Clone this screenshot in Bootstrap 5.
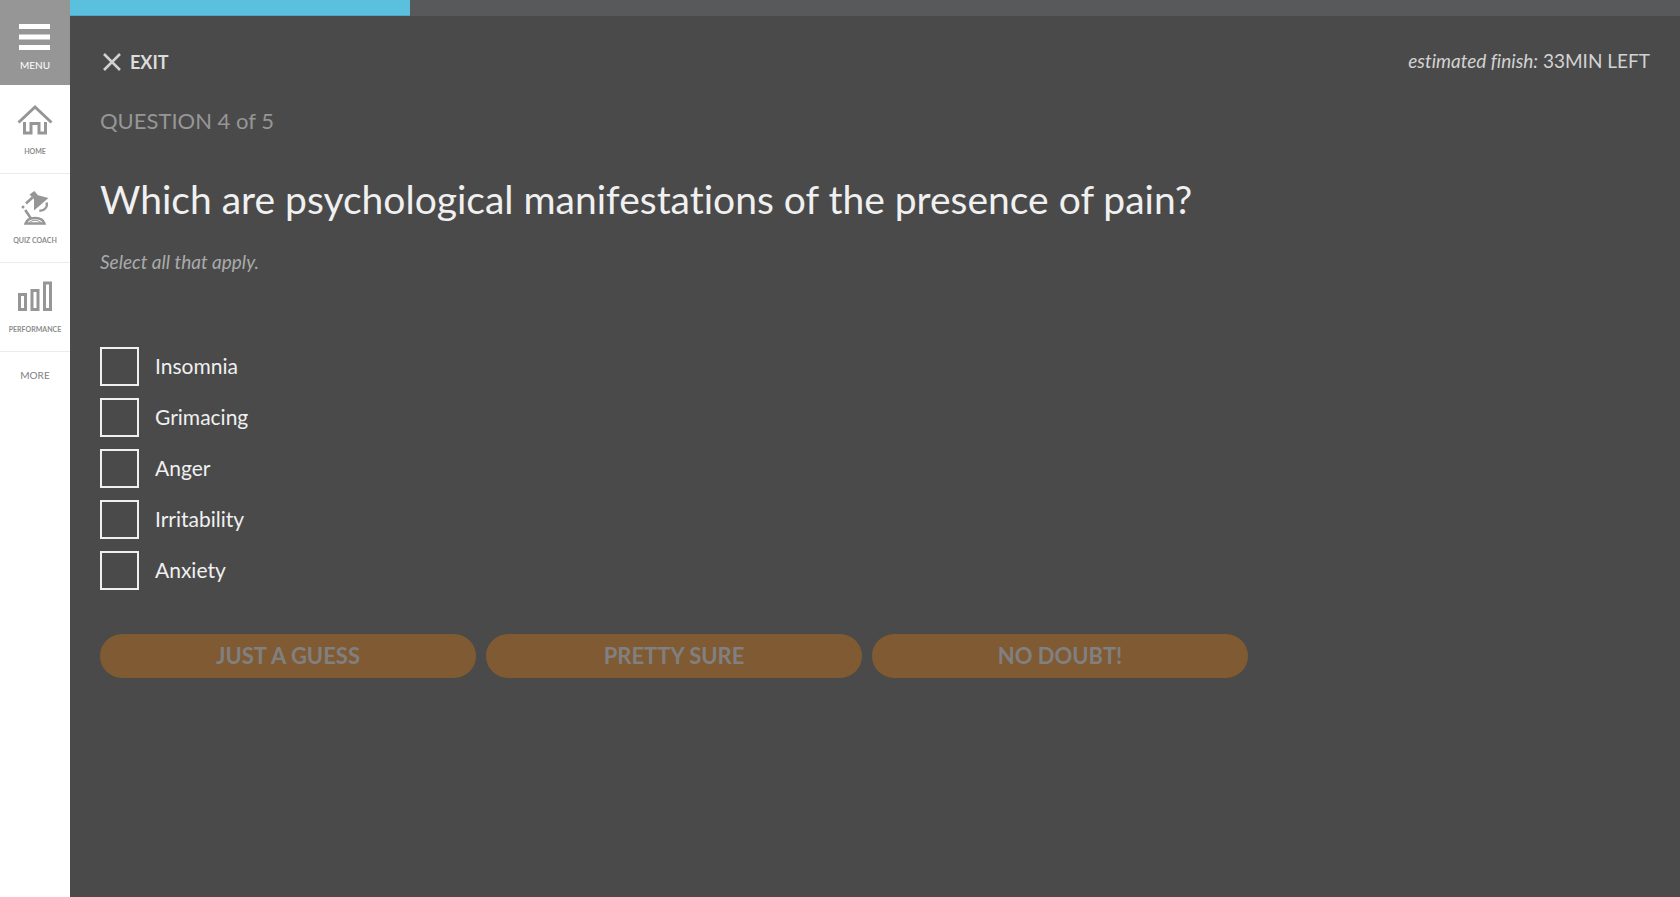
<!DOCTYPE html>
<html lang="en">
<head>
<meta charset="utf-8">
<meta name="viewport" content="width=device-width, initial-scale=1">
<title>Quiz</title>
<link rel="stylesheet" href="https://cdn.jsdelivr.net/npm/bootstrap@5.3.0/dist/css/bootstrap.min.css">
<style>
body { font-family: Lato, "Open Sans", sans-serif; font-variant-ligatures: none; background: #4a4a4a; color: #f0f0f0; }
a { text-decoration: none; }
.side-nav { width: 70px; background: #fff; }
.menu-btn { height: 85px; background: #969696; color: #fff; font-size: 10px; line-height: 12px; padding-top: 24px; gap: 8px; }
.side-link { height: 89px; color: #8c8c8c; font-size: 7px; font-weight: 700; line-height: 8px; padding-top: 17px; gap: 11px; border-bottom: 1px solid #ebebeb; }
.more-btn { height: 47px; color: #808080; font-size: 10px; }
.side-nav svg, .exit-link svg { display: block; flex: none; }
.quiz-progress { height: 16px; background: #58595b; border-radius: 0; }
.quiz-progress .progress-bar { background: #5bc0de; border-bottom: 1px solid #4fa7c1; }
.quiz-body { padding: 32px 30px; }
.exit-link { color: #dcdcdc; font-size: 18px; font-weight: 700; line-height: 28px; gap: 8px; }
.time-left { color: #d2d2d2; font-size: 19px; line-height: 26px; }
.q-count { color: #969696; font-size: 22px; line-height: 32px; margin-top: 29px; }
.q-text { font-size: 39px; font-weight: 400; line-height: 50px; margin: 37px 0 0; }
.q-hint { color: #aaa; font-size: 19px; line-height: 28px; margin: 24px 0 0; }
.answers { gap: 12px; margin-top: 71px; }
.answer { gap: 16px; font-size: 21px; line-height: 38px; }
.answer .form-check-input { width: 39px; height: 39px; margin: 0; border: 2px solid #f0f0f0; border-radius: 0; background-color: transparent; }
.sure-row { max-width: 1148px; gap: 10px; margin-top: 44px; }
.sure-btn, .sure-btn:disabled { height: 44px; padding: 0; border: 0; background: #805a33; color: #808080; font-size: 22px; font-weight: 700; line-height: 44px; opacity: 1; }
</style>
</head>
<body>
<div class="d-flex min-vh-100">
  <nav class="side-nav d-flex flex-column flex-shrink-0" aria-label="Main">
    <button type="button" class="menu-btn border-0 px-0 pb-0 d-flex flex-column align-items-center">
      <svg width="32" height="27" viewBox="0 0 32 27" fill="#fff" aria-hidden="true"><path d="M0 0h31v5H0zM0 10.500h31v5H0zM0 21h31v5H0z"/></svg>
      MENU
    </button>
    <a href="#home" class="side-link d-flex flex-column align-items-center">
      <svg width="36" height="34" viewBox="0 -2 36 34" fill="none" stroke="#969696" stroke-width="3" aria-hidden="true"><path d="M1.500 18.500 18 3l16.500 15.500"/><path d="M7.500 18v11H14V19.500h8V29h6.500V18"/></svg>
      HOME
    </a>
    <a href="#coach" class="side-link d-flex flex-column align-items-center">
      <svg width="30" height="34" viewBox="0 0 30 34" aria-hidden="true"><path d="M9.500 3.500 14.300 0l3.700 4.200L28.500 7 14 19.500V8.500L12.500 6.500z" fill="#969696"/><g fill="none" stroke="#969696"><path d="M12.500 6.500 6 12.500" stroke-width="2.500"/><path d="M5.200 19 11 27.500" stroke-width="2.500"/><path d="M26.500 11.500A6 6 0 0 1 19.300 19.300" stroke-width="2.300"/><path d="M5.500 32.500c2-7.500 17-7.500 19 0z" stroke-width="2.500"/><path d="M9 31.500q6-4.500 12 0" stroke-width="1"/></g><circle cx="3" cy="16" r="1.500" fill="#969696"/></svg>
      QUIZ COACH
    </a>
    <a href="#performance" class="side-link d-flex flex-column align-items-center">
      <svg width="34" height="34" viewBox="0 0 34 34" fill="none" stroke="#969696" stroke-width="3" aria-hidden="true"><path d="M1.500 14.500h6v15h-6zM14 10.500h6v19h-6zM26.500 3h6v26.500h-6z"/></svg>
      PERFORMANCE
    </a>
    <button type="button" class="more-btn border-0 bg-transparent p-0">MORE</button>
  </nav>
  <main class="flex-grow-1">
    <div class="progress quiz-progress" role="progressbar" aria-label="Quiz progress" aria-valuenow="21" aria-valuemin="0" aria-valuemax="100">
      <div class="progress-bar" style="width: 21.1%"></div>
    </div>
    <div class="quiz-body">
      <div class="d-flex justify-content-between">
        <a href="#exit" class="exit-link d-flex align-items-center">
          <svg width="22" height="20" viewBox="0 0 22 20" fill="none" stroke="#d2d2d2" stroke-width="2.500" aria-hidden="true"><path d="m4 2 16 16M20 2 4 18"/></svg>
          EXIT
        </a>
        <div class="time-left"><em>estimated finish:</em> 33MIN LEFT</div>
      </div>
      <div class="q-count">QUESTION 4 of 5</div>
      <h1 class="q-text">Which are psychological manifestations of the presence of pain?</h1>
      <p class="q-hint fst-italic">Select all that apply.</p>
      <form>
        <div class="answers d-flex flex-column align-items-start">
          <div class="answer d-flex"><input class="form-check-input" type="checkbox" id="a1"><label for="a1">Insomnia</label></div>
          <div class="answer d-flex"><input class="form-check-input" type="checkbox" id="a2"><label for="a2">Grimacing</label></div>
          <div class="answer d-flex"><input class="form-check-input" type="checkbox" id="a3"><label for="a3">Anger</label></div>
          <div class="answer d-flex"><input class="form-check-input" type="checkbox" id="a4"><label for="a4">Irritability</label></div>
          <div class="answer d-flex"><input class="form-check-input" type="checkbox" id="a5"><label for="a5">Anxiety</label></div>
        </div>
        <div class="sure-row d-flex">
          <button type="submit" class="btn sure-btn rounded-pill w-100" disabled>JUST A GUESS</button>
          <button type="submit" class="btn sure-btn rounded-pill w-100" disabled>PRETTY SURE</button>
          <button type="submit" class="btn sure-btn rounded-pill w-100" disabled>NO DOUBT!</button>
        </div>
      </form>
    </div>
  </main>
</div>
<script src="https://cdn.jsdelivr.net/npm/bootstrap@5.3.0/dist/js/bootstrap.bundle.min.js"></script>
</body>
</html>
